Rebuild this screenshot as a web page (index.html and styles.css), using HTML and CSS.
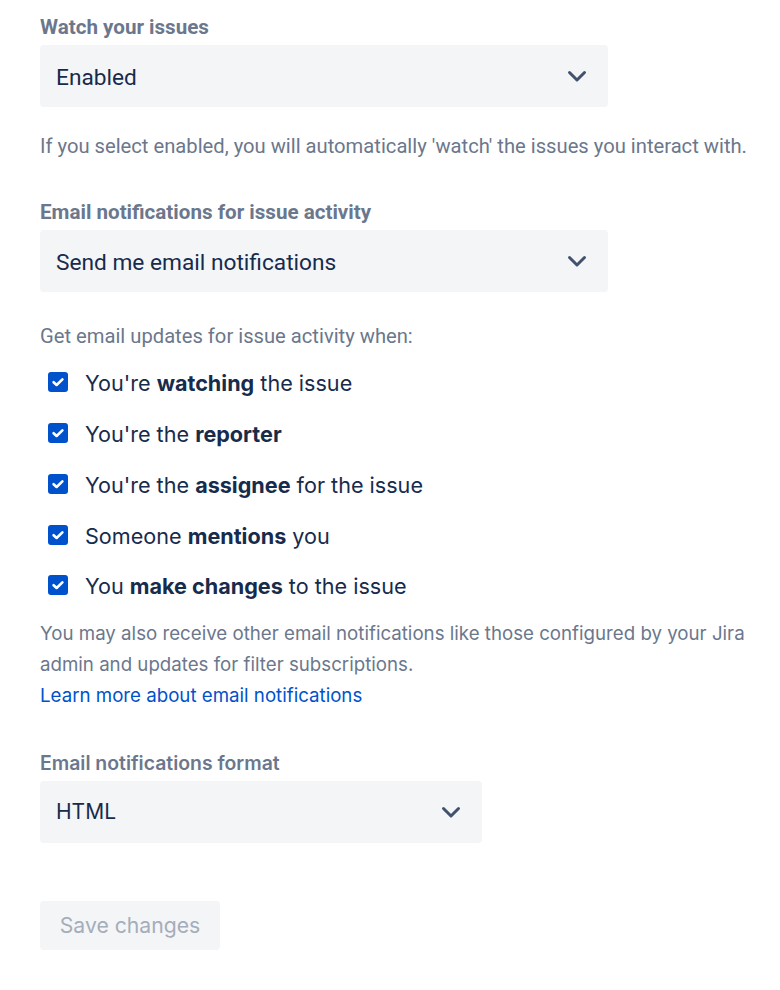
FILE: index.html
```html
<!DOCTYPE html>
<html>
<head>
<meta charset="utf-8">
<link rel="stylesheet" href="styles.css">
</head>
<body>
<div class="page">
  <div class="field">
    <div class="label roboto">Watch your issues</div>
    <div class="select roboto">
      <span>Enabled</span>
      <svg class="chev" width="24" height="24" viewBox="0 0 24 24"><path d="M4.5 8.5 L12 16 L19.5 8.5" fill="none" stroke="#42526e" stroke-width="3" stroke-linecap="round" stroke-linejoin="round"/></svg>
    </div>
    <div class="help roboto">If you select enabled, you will automatically 'watch' the issues you interact with.</div>
  </div>

  <div class="field f2">
    <div class="label roboto">Email notifications for issue activity</div>
    <div class="select roboto">
      <span>Send me email notifications</span>
      <svg class="chev" width="24" height="24" viewBox="0 0 24 24"><path d="M4.5 8.5 L12 16 L19.5 8.5" fill="none" stroke="#42526e" stroke-width="3" stroke-linecap="round" stroke-linejoin="round"/></svg>
    </div>
    <div class="help2 roboto">Get email updates for issue activity when:</div>
    <ul class="checks">
      <li><span class="box"><svg width="20" height="20" viewBox="0 0 20 20"><rect x="0" y="0" width="20" height="20" rx="3" fill="#0052cc"/><path d="M5.6 10.2 L8.6 13 L14.4 7.4" fill="none" stroke="#fff" stroke-width="2.6" stroke-linecap="round" stroke-linejoin="round"/></svg></span><span>You're <b>watching</b> the issue</span></li>
      <li><span class="box"><svg width="20" height="20" viewBox="0 0 20 20"><rect x="0" y="0" width="20" height="20" rx="3" fill="#0052cc"/><path d="M5.6 10.2 L8.6 13 L14.4 7.4" fill="none" stroke="#fff" stroke-width="2.6" stroke-linecap="round" stroke-linejoin="round"/></svg></span><span>You're the <b>reporter</b></span></li>
      <li><span class="box"><svg width="20" height="20" viewBox="0 0 20 20"><rect x="0" y="0" width="20" height="20" rx="3" fill="#0052cc"/><path d="M5.6 10.2 L8.6 13 L14.4 7.4" fill="none" stroke="#fff" stroke-width="2.6" stroke-linecap="round" stroke-linejoin="round"/></svg></span><span>You're the <b>assignee</b> for the issue</span></li>
      <li><span class="box"><svg width="20" height="20" viewBox="0 0 20 20"><rect x="0" y="0" width="20" height="20" rx="3" fill="#0052cc"/><path d="M5.6 10.2 L8.6 13 L14.4 7.4" fill="none" stroke="#fff" stroke-width="2.6" stroke-linecap="round" stroke-linejoin="round"/></svg></span><span>Someone <b>mentions</b> you</span></li>
      <li><span class="box"><svg width="20" height="20" viewBox="0 0 20 20"><rect x="0" y="0" width="20" height="20" rx="3" fill="#0052cc"/><path d="M5.6 10.2 L8.6 13 L14.4 7.4" fill="none" stroke="#fff" stroke-width="2.6" stroke-linecap="round" stroke-linejoin="round"/></svg></span><span>You <b>make changes</b> to the issue</span></li>
    </ul>
    <p class="note">You may also receive other email notifications like those configured by your Jira admin and updates for filter subscriptions.<br><a class="link" href="#">Learn more about email notifications</a></p>
  </div>

  <div class="field f3">
    <div class="label">Email notifications format</div>
    <div class="select narrow">
      <span>HTML</span>
      <svg class="chev" width="24" height="24" viewBox="0 0 24 24"><path d="M4.5 8.5 L12 16 L19.5 8.5" fill="none" stroke="#42526e" stroke-width="3" stroke-linecap="round" stroke-linejoin="round"/></svg>
    </div>
  </div>

  <button class="save" disabled>Save changes</button>
</div>
</body>
</html>
```

FILE: styles.css
```css
* { box-sizing: border-box; }
html, body { margin: 0; padding: 0; background: #fff; }
body { font-family: Inter, "Noto Sans", sans-serif; color: #172b4d; }
.page { padding: 15px 0 0 40px; width: 780px; }
.roboto { font-family: Roboto, "Noto Sans", sans-serif; }
.label { font-size: 19.4px; font-weight: 600; color: #6b778c; line-height: 24px; height: 24px; margin-bottom: 6px; white-space: nowrap; }
.roboto.label { font-size: 20.6px; font-weight: 700; }
.select { width: 568px; height: 62px; background: #f4f5f7; border-radius: 4px; display: flex; align-items: center; justify-content: space-between; padding: 0 19px 0 16px; font-size: 21px; color: #172b4d; }
.roboto.select { font-size: 22.7px; }
.roboto.select span { padding-top: 2px; }
.select.narrow { width: 442px; }
.chev { display: block; }
.help { font-size: 20.2px; color: #6b778c; margin-top: 27px; line-height: 24px; white-space: nowrap; }
.f2 { margin-top: 42px; }
.help2 { font-size: 20.2px; color: #6b778c; margin-top: 32px; line-height: 24px; }
.checks { list-style: none; margin: 10px 0 0 0; padding: 0; }
.checks li { display: flex; align-items: center; height: 50.75px; font-size: 21.6px; color: #172b4d; }
.checks b { font-weight: 700; }
.box { width: 20px; height: 20px; margin-left: 8px; margin-right: 17px; display: block; margin-top: -2px; }
.box svg { display: block; }
.note { margin: 6px 0 0 0; font-size: 18.7px; line-height: 31px; color: #6b778c; width: 730px; }
.link { color: #0052cc; text-decoration: none; }
.f3 { margin-top: 40px; }
.save { margin-top: 58px; width: 180px; height: 49px; border: 0; border-radius: 4px; background: #f4f5f7; color: #a5adba; font-family: Inter, "Noto Sans", sans-serif; font-size: 21.2px; padding: 0; }
```
